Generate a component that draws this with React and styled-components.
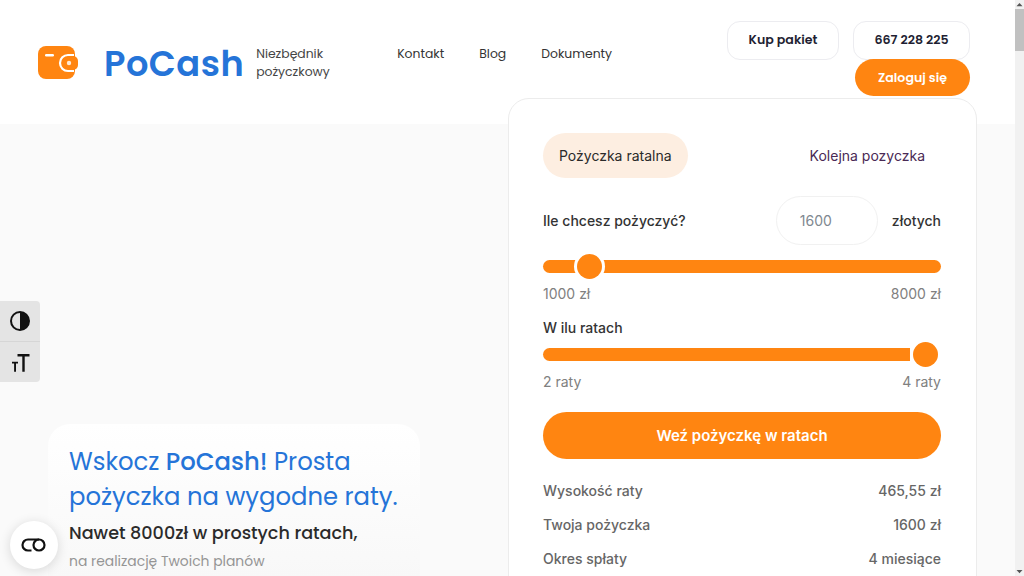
import React from "react";
import styled, { createGlobalStyle } from "styled-components";

const ORANGE = "#ff8511";
const BLUE = "#2574d8";
const HEAD = '"Poppins", "Lato", "Open Sans", "Liberation Sans", sans-serif';
const BODY = 'Inter, "Liberation Sans", sans-serif';

const GlobalStyle = createGlobalStyle`
  html, body {
    margin: 0;
    padding: 0;
    height: 576px;
    overflow: hidden;
    background: #fafafa;
  }
  * { box-sizing: border-box; }
`;

const Page = styled.div`
  position: relative;
  width: 1024px;
  height: 576px;
  overflow: hidden;
  padding-right: 9px;
  font-family: ${BODY};
`;

const Header = styled.header`
  height: 124px;
  background: #fff;
  display: flex;
  align-items: flex-start;
  padding: 21px 45px 0 38px;
`;

const Logo = styled.a`
  display: flex;
  align-items: center;
  margin-top: 23px;
  height: 38px;
`;

const LogoName = styled.span`
  font-family: ${HEAD};
  font-size: 35.2px;
  font-weight: 600;
  color: ${BLUE};
  margin-left: 26px;
  letter-spacing: 0.5px;
`;

const Tagline = styled.span`
  font-family: ${HEAD};
  font-size: 12.4px;
  line-height: 18px;
  color: #444;
  margin-left: 12px;
  width: 90px;
`;

const Nav = styled.nav`
  display: flex;
  gap: 35px;
  margin: 24px 0 0 51px;
  font-family: ${HEAD};
  font-size: 12.4px;
  line-height: 18px;
  color: #333;
`;

const Actions = styled.div`
  margin-left: auto;
  display: grid;
  grid-template-columns: 112px 117px;
  column-gap: 14px;
  justify-items: end;
`;

const OutlineButton = styled.button`
  width: 100%;
  height: 39px;
  padding: 0 0 2px;
  border: 1px solid #ececf0;
  border-radius: 13px;
  background: #fff;
  font-family: ${HEAD};
  font-size: 12.6px;
  font-weight: 600;
  color: #1f1f33;
`;

const LoginButton = styled.button`
  grid-column: 2;
  width: 115px;
  height: 37px;
  margin-top: -1px;
  border: 0;
  border-radius: 19px;
  background: ${ORANGE};
  color: #fff;
  font-family: ${HEAD};
  font-size: 12.6px;
  font-weight: 600;
`;

const Main = styled.main`
  display: grid;
  grid-template-columns: 420px 469px;
  column-gap: 88px;
  height: 452px;
`;

const Hero = styled.section`
  margin: 300px 0 0 48px;
  width: 372px;
  height: 220px;
  padding: 21px 16px 0 21px;
  border-radius: 22px;
  background: linear-gradient(#fff, #f8f8f8 70%);
`;

const HeroTitle = styled.h1`
  margin: 0;
  font-family: ${HEAD};
  font-size: 24.3px;
  font-weight: 400;
  line-height: 34.5px;
  color: ${BLUE};
  strong { font-weight: 500; }
`;

const HeroLead = styled.p`
  margin: 7px 0 0;
  font-family: ${HEAD};
  font-size: 17.6px;
  font-weight: 500;
  line-height: 24px;
  color: #2b2b2b;
`;

const HeroNote = styled.p`
  margin: 5px 0 0;
  font-family: ${HEAD};
  font-size: 13.9px;
  line-height: 22px;
  color: #959595;
`;

const Card = styled.section`
  margin-top: -26px;
  height: 520px;
  padding: 34px 35px 34px 34px;
  background: #fff;
  border: 1px solid #ececec;
  border-radius: 21px;
`;

const Tabs = styled.div`
  display: flex;
  justify-content: space-between;
  align-items: center;
`;

const Tab = styled.button`
  height: 45px;
  padding: 0 16px;
  border: 0;
  border-radius: 23px;
  background: ${(p) => (p.$active ? "#fdeee1" : "transparent")};
  color: ${(p) => (p.$active ? "#2a2a2a" : "#4a2a55")};
  font-family: ${BODY};
  font-size: 14px;
  font-weight: 400;
`;

const AmountRow = styled.div`
  display: flex;
  align-items: center;
  margin-top: 18px;
`;

const Label = styled.span`
  font-size: 14px;
  font-weight: 500;
  color: #333;
  line-height: 17px;
`;

const AmountInput = styled.div`
  width: 102px;
  height: 49px;
  margin: 0 14px 0 auto;
  border: 1px solid #f1f1f1;
  border-radius: 25px;
  padding-left: 23px;
  display: flex;
  align-items: center;
  font-size: 14px;
  color: #808890;
`;

const SliderBlock = styled.div`
  margin-top: ${(p) => p.$top}px;
`;

const Track = styled.div`
  position: relative;
  height: 13px;
  margin-top: ${(p) => p.$top}px;
  margin-right: ${(p) => (p.$full ? "31px" : "0")};
  border-radius: ${(p) => (p.$full ? "7px 0 0 7px" : "7px")};
  background: ${ORANGE};
`;

const Thumb = styled.span`
  position: absolute;
  top: -6px;
  width: 25px;
  height: 25px;
  border-radius: 50%;
  background: ${ORANGE};
  box-shadow: 0 0 0 3px #fff;
`;

const Scale = styled.div`
  display: flex;
  justify-content: space-between;
  margin-top: 12px;
  font-size: 14px;
  line-height: 17px;
  color: #808080;
`;

const CTA = styled.button`
  display: block;
  width: 100%;
  height: 47px;
  margin-top: 22px;
  border: 0;
  border-radius: 24px;
  background: ${ORANGE};
  color: #fff;
  font-family: ${BODY};
  font-size: 15px;
  font-weight: 600;
`;

const Summary = styled.dl`
  margin: 15px 0 0;
  display: grid;
`;

const SummaryRow = styled.div`
  display: flex;
  justify-content: space-between;
  align-items: center;
  height: 33.8px;
  font-size: 14px;
  color: #666;
  dt { font-weight: 500; }
  dd { margin: 0; font-weight: 500; }
`;

const A11yBar = styled.aside`
  position: absolute;
  left: 0;
  top: 301px;
  width: 40px;
  border-radius: 0 4px 4px 0;
  background: #e4e4e4;
`;

const A11yItem = styled.div`
  height: ${(p) => p.$h}px;
  display: flex;
  align-items: center;
  justify-content: center;
  & + & { border-top: 1px solid #d6d6d6; }
`;

const CookieBadge = styled.div`
  position: absolute;
  left: 10px;
  top: 521px;
  width: 48px;
  height: 48px;
  border-radius: 50%;
  background: #fff;
  box-shadow: 0 2px 12px rgba(0, 0, 0, 0.14);
  display: flex;
  align-items: center;
  justify-content: center;
`;

const Scrollbar = styled.div`
  position: absolute;
  right: 0;
  top: 0;
  bottom: 0;
  width: 9px;
  background: #f1f1f1;
  display: flex;
  flex-direction: column;
  justify-content: space-between;
`;

const ScrollArrow = styled.svg`
  display: block;
  flex: none;
  width: 9px;
  height: 9px;
`;

const ScrollThumb = styled.div`
  height: 42px;
  margin-bottom: auto;
  background: #c1c1c1;
`;

function WalletIcon() {
  return (
    <svg width="40" height="34" viewBox="0 0 40 34">
      <rect x="0" y="0" width="37" height="33" rx="8" fill={ORANGE} />
      <rect x="7" y="8" width="9" height="2.4" rx="1.2" fill="#fff" />
      <path d="M36 9h-6a8 8 0 0 0 0 16h6" fill="none" stroke="#fff" strokeWidth="2.2" />
      <rect x="27" y="10" width="13" height="14" rx="5" fill={ORANGE} />
      <circle cx="31" cy="17" r="2.2" fill="#ffe9d2" />
    </svg>
  );
}

export default function App() {
  return (
    <Page>
      <GlobalStyle />
      <Header>
        <Logo>
          <WalletIcon />
          <LogoName>PoCash</LogoName>
          <Tagline>Niezbędnik pożyczkowy</Tagline>
        </Logo>
        <Nav>
          <span>Kontakt</span>
          <span>Blog</span>
          <span>Dokumenty</span>
        </Nav>
        <Actions>
          <OutlineButton>Kup pakiet</OutlineButton>
          <OutlineButton>667 228 225</OutlineButton>
          <LoginButton>Zaloguj się</LoginButton>
        </Actions>
      </Header>
      <Main>
        <Hero>
          <HeroTitle>
            Wskocz <strong>PoCash!</strong> Prosta pożyczka na wygodne raty.
          </HeroTitle>
          <HeroLead>Nawet 8000zł w prostych ratach,</HeroLead>
          <HeroNote>na realizację Twoich planów</HeroNote>
        </Hero>
        <Card>
          <Tabs>
            <Tab $active>Pożyczka ratalna</Tab>
            <Tab>Kolejna pozyczka</Tab>
          </Tabs>
          <AmountRow>
            <Label>Ile chcesz pożyczyć?</Label>
            <AmountInput>1600</AmountInput>
            <Label>złotych</Label>
          </AmountRow>
          <SliderBlock $top={0}>
            <Track $top={15}>
              <Thumb style={{ left: "34px" }} />
            </Track>
            <Scale>
              <span>1000 zł</span>
              <span>8000 zł</span>
            </Scale>
          </SliderBlock>
          <SliderBlock $top={15}>
            <Label>W ilu ratach</Label>
            <Track $top={11} $full>
              <Thumb style={{ left: "370px" }} />
            </Track>
            <Scale>
              <span>2 raty</span>
              <span>4 raty</span>
            </Scale>
          </SliderBlock>
          <CTA>Weź pożyczkę w ratach</CTA>
          <Summary>
            <SummaryRow><dt>Wysokość raty</dt><dd>465,55 zł</dd></SummaryRow>
            <SummaryRow><dt>Twoja pożyczka</dt><dd>1600 zł</dd></SummaryRow>
            <SummaryRow><dt>Okres spłaty</dt><dd>4 miesiące</dd></SummaryRow>
          </Summary>
        </Card>
      </Main>
      <A11yBar>
        <A11yItem $h={40}>
          <svg width="20" height="20" viewBox="0 0 20 20">
            <circle cx="10" cy="10" r="9" fill="none" stroke="#111" strokeWidth="2" />
            <path d="M10 1a9 9 0 0 1 0 18z" fill="#111" />
          </svg>
        </A11yItem>
        <A11yItem $h={41}>
          <svg width="20" height="20" viewBox="0 0 20 20" fill="#111">
            <path d="M7.500 2h12v2.400h-4.800v15.300h-2.400V4.400H7.500z" />
            <path d="M2 9.700h6v1.900H6v8.100H4.100v-8.100H2z" />
          </svg>
        </A11yItem>
      </A11yBar>
      <CookieBadge>
        <svg width="26" height="14" viewBox="0 0 26 14" fill="none" stroke="#111" strokeWidth="2.200">
          <path d="M18 1.500H7a5.500 5.500 0 0 0 0 11h3.500" />
          <circle cx="18" cy="7" r="5.500" />
        </svg>
      </CookieBadge>
      <Scrollbar>
        <ScrollArrow viewBox="0 0 9 9" fill="#555">
          <path d="M4.500 3 7.500 6.200H1.500z" />
        </ScrollArrow>
        <ScrollThumb />
        <ScrollArrow viewBox="0 0 9 9" fill="#555">
          <path d="M4.500 6.200 1.500 3h6z" />
        </ScrollArrow>
      </Scrollbar>
    </Page>
  );
}
